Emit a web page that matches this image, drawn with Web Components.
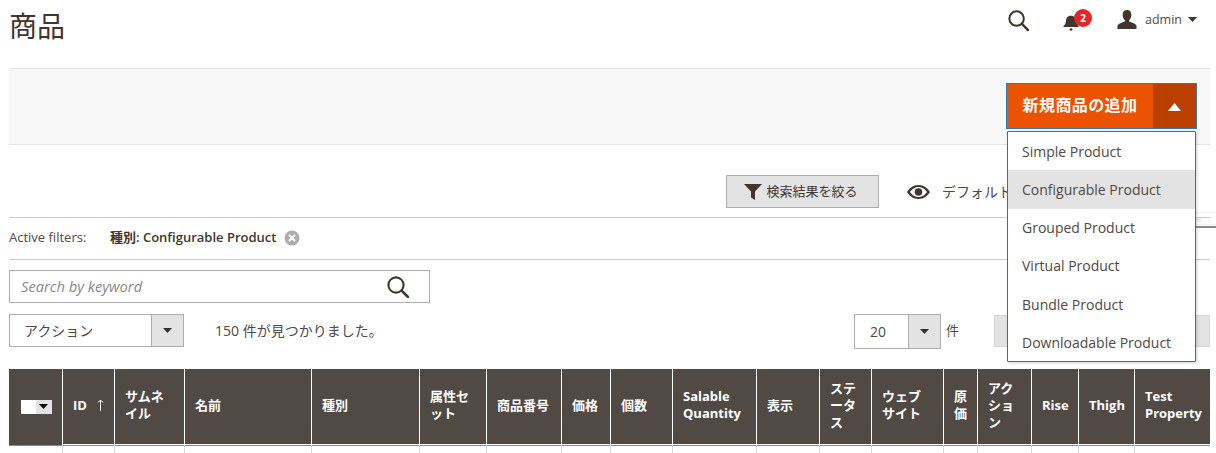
<!DOCTYPE html>
<html lang="ja"><head><meta charset="utf-8"><title>商品</title>
<style>
html,body{margin:0;padding:0;background:#fff;height:453px;overflow:hidden}
body{font-family:"Open Sans","Noto Sans CJK JP",sans-serif;color:#41362f;font-size:14px}
</style></head><body>
<admin-page>
  <page-header></page-header>
  <action-bar></action-bar>
  <grid-toolbar></grid-toolbar>
  <active-filters></active-filters>
  <search-row></search-row>
  <paging-row></paging-row>
  <product-grid></product-grid>
  <drag-ghost></drag-ghost>
</admin-page>
<script>
const FONT='"Open Sans","Noto Sans CJK JP",sans-serif';
function def(name,css,html){
  customElements.define(name,class extends HTMLElement{
    constructor(){super();const r=this.attachShadow({mode:'open'});
      r.innerHTML='<style>:host{box-sizing:border-box}*{box-sizing:border-box}'+css+'</style>'+html;}
  });
}
const caret=(c='#303030')=>`<svg width="9" height="5" viewBox="0 0 9 5"><path d="M0 0h9L4.5 5z" fill="${c}"/></svg>`;
const lens=(s)=>`<svg width="${s}" height="${s}" viewBox="0 0 22 22" fill="none" stroke="#41362f" stroke-width="2.1"><circle cx="9" cy="9" r="7.6"/><path d="M14.6 14.6 21 21" stroke-width="2.6" stroke-linecap="round"/></svg>`;

def('admin-page',':host{display:block;position:relative;width:1216px;height:453px;overflow:hidden;padding:0 6px 0 9px}','<slot></slot>');

def('page-header',`:host{display:flex;height:68px;align-items:flex-start;justify-content:space-between}
h1{margin:0;padding-top:8px;font:400 28px/36px ${FONT};color:#41362f}
.r{display:flex;align-items:center;height:38px;font-size:12.5px;color:#514943}
.bell{position:relative;margin-left:34px;width:20px;height:20px}
.bell svg{position:absolute;left:0;top:6px}
.badge{position:absolute;left:11px;top:0;width:18px;height:18px;border-radius:50%;background:#e22626;color:#fff;font:700 10px/18px ${FONT};text-align:center}
.user{margin-left:34px;display:flex}
.name{margin-left:8px}
.car{margin-left:6px;display:flex;margin-right:13px}`,
`<h1>商品</h1><div class="r">
<span style="display:flex;margin-top:3px">${lens(21)}</span>
<span class="bell"><svg width="16" height="17" viewBox="0 0 16 20" preserveAspectRatio="none"><path d="M8 1c3.400 0 4.800 2.600 5 5.500.2 3 .8 4.900 2.500 6.500v1H.5v-1C2.200 11.400 2.800 9.500 3 6.500 3.200 3.600 4.600 1 8 1z" fill="#41362f"/><circle cx="8" cy="17" r="1.400" fill="#41362f"/></svg><span class="badge">2</span></span>
<span class="user"><svg width="20" height="19" viewBox="0 0 20 19"><path d="M10 0c2.900 0 4.400 2 4.400 4.900 0 2.200-1 4.300-2.300 5.300v1.400c2.600.9 6 1.700 7.400 3.900V19H.5v-3.500c1.400-2.200 4.800-3 7.400-3.900v-1.400C6.600 9.200 5.600 7.100 5.600 4.900 5.600 2 7.100 0 10 0z" fill="#41362f"/></svg></span>
<span class="name">admin</span><span class="car">${caret('#41362f')}</span></div>`);

def('action-bar',`:host{display:flex;justify-content:flex-end;height:77px;background:#f8f8f8;border-top:1px solid #e3e3e3;border-bottom:1px solid #e3e3e3;padding:14px 13px 0 0;position:relative;z-index:5}
.split{position:relative;display:flex;width:191px;height:46px;border:1px solid #2d7bb5;background:#eb5202;color:#fff}
.main{flex:1;font:700 16px/42px ${FONT};letter-spacing:.4px;text-align:center;white-space:nowrap}
.tog{width:43px;background:#ba4000;display:flex;align-items:center;justify-content:center;padding-top:1px}
.menu{position:absolute;left:0;top:47px;width:189px;height:231px;background:#fff;border:1px solid #1979c3;box-shadow:1px 1px 3px rgba(0,0,0,.18);border-radius:1px;display:flex;flex-direction:column;color:#514943;font:400 14px/38.300px ${FONT}}
.menu div{padding:.5px 0 0 14px;height:38.300px}
.menu .on{background:#e3e3e3}`,
`<div class="split"><div class="main">新規商品の追加</div><div class="tog"><svg width="13" height="8" viewBox="0 0 13 8"><path d="M6.500 0 13 8H0z" fill="#fff"/></svg></div>
<div class="menu"><div>Simple Product</div><div class="on">Configurable Product</div><div>Grouped Product</div><div>Virtual Product</div><div>Bundle Product</div><div>Downloadable Product</div></div></div>`);

def('grid-toolbar',`:host{display:flex;height:73px;border-bottom:1px solid #ccc;padding:30px 0 0 717px;align-items:flex-start;white-space:nowrap;overflow:hidden}
.f{width:153px;height:33px;background:#e3e3e3;border:1px solid #adadad;display:flex;align-items:center;justify-content:center;font:400 13px/1 ${FONT};color:#41362f;gap:4px;padding-right:3px}
.e{display:flex;align-items:center;height:33px;margin-left:28px;font:400 14px/1 ${FONT};color:#514943;gap:12px}`,
`<div class="f"><svg width="18" height="16" viewBox="0 0 18 16"><path d="M0 0h18l-7 7.500V16l-4-2.500V7.500z" fill="#41362f"/></svg><span>検索結果を絞る</span></div>
<div class="e"><svg width="23" height="14" viewBox="0 0 23 14"><path fill-rule="evenodd" d="M11.500 0C17 0 21 3.500 23 7c-2 3.500-6 7-11.500 7S2 10.500 0 7c2-3.500 6-7 11.500-7zM3 7c1.800 2.500 4.500 5 8.500 5s6.700-2.500 8.500-5c-1.800-2.500-4.500-5-8.500-5S4.800 4.500 3 7z" fill="#41362f"/><circle cx="11.500" cy="7" r="3.800" fill="#41362f"/></svg><span>デフォルト</span></div>`);

def('active-filters',`:host{display:flex;height:42px;border-bottom:1px solid #ccc;align-items:center;padding-bottom:2px;font:400 13px/1 ${FONT};color:#514943}
.l{width:101px}
b{font:600 13px/1 ${FONT};color:#41362f}
.x{margin-left:8px;display:flex}`,
`<span class="l">Active filters:</span><b>種別: Configurable Product</b><span class="x"><svg width="16" height="16" viewBox="0 0 16 16"><circle cx="8" cy="8" r="7.500" fill="#adadad"/><path d="M5 5l6 6M11 5l-6 6" stroke="#fff" stroke-width="2"/></svg></span>`);

def('search-row',`:host{display:block;padding-top:10px;height:44px}
.b{width:421px;height:33px;border:1px solid #adadad;display:flex;align-items:center;justify-content:space-between;padding:0 20px 0 11px;font:italic 400 14.700px/1 ${FONT};color:#8a8a8a}`,
`<div class="b"><span>Search by keyword</span><span style="display:flex;margin-top:1px">${lens(22)}</span></div>`);

def('select-box',`:host{display:flex;height:33px;border:1px solid #adadad;font:400 14px/1 ${FONT};color:#514943;background:#fff}
.t{flex:1;display:flex;align-items:center}
.a{width:32px;background:#e3e3e3;border-left:1px solid #adadad;display:flex;align-items:center;justify-content:center}`,
`<span class="t"><slot></slot></span><span class="a">${caret()}</span>`);

def('paging-row',`:host{display:flex;height:65px;padding-top:10px;align-items:flex-start;font:400 14px/1 ${FONT};color:#514943;white-space:nowrap}
.found{margin-left:31px;height:33px;display:flex;align-items:center}
select-box.a{width:175px;padding-left:14px}
select-box.n{width:87px;height:35px;margin-left:auto;padding-left:15px}
.u{margin-left:5px;height:33px;display:flex;align-items:center;font-size:13px}
.g{margin-left:35px;width:216px;height:32px;margin-top:1px;background:#e3e3e3;border:1px solid #d6d6d6}`,
`<select-box class="a">アクション</select-box><span class="found">150 件が見つかりました。</span><select-box class="n">20</select-box><span class="u">件</span><span class="g"></span>`);

const cols=[["",53],["ID",52],["サムネイル",70],["名前",127],["種別",108],["属性セット",67],["商品番号",75],["価格",49],["個数",62],["Salable Quantity",84],["表示",63],["ステータス",52],["ウェブサイト",72],["原価",34],["アクション",54],["Rise",47],["Thigh",56],["Test Property",76]];
def('product-grid',`:host{display:block}
table{border-collapse:separate;border-spacing:0;table-layout:fixed;width:1201px}
th{background:#514943;color:#fff;font:700 13px/17px ${FONT};text-align:left;padding:0 10px 3px 10px;height:76px;border-left:1px solid #fff;border-bottom:1px solid #fff;box-shadow:0 1px 0 #8a8a8a;overflow:hidden}
th:first-child{border-left:0;border-bottom-color:#514943;padding:0}
th:last-child{padding-right:4px}
td{height:10px;padding:0;border-left:1px solid #d6d6d6}
td:first-child{border-left:0}
.cb{display:flex;justify-content:center;padding-left:1px}
.cb i{display:block;width:15px;height:14px;background:#fff}
.cb span{display:flex;align-items:center;justify-content:center;width:16px;height:14px;background:#e3e3e3}
.id{display:flex;gap:10px;align-items:center;white-space:nowrap}`,
`<table><colgroup>${cols.map(c=>`<col style="width:${c[1]}px">`).join('')}</colgroup><thead><tr>${cols.map((c,i)=>{
 if(i==0)return `<th><div class="cb"><i></i><span>${caret('#000')}</span></div></th>`;
 if(i==1)return `<th><div class="id"><span>ID</span><svg width="7" height="12" viewBox="0 0 7 12"><path d="M3.500 12V1M1 3.500 3.500 1 6 3.500" fill="none" stroke="#fff" stroke-width="1"/></svg></div></th>`;
 return `<th>${c[0]}</th>`}).join('')}</tr></thead><tbody><tr>${cols.map(()=>'<td></td>').join('')}</tr></tbody></table>`);

def('drag-ghost',`:host{position:absolute;left:1145px;top:212px;width:71px;height:16px;z-index:2;pointer-events:none;overflow:hidden}
.t{position:absolute;left:0;top:0;width:80px;height:13px;border:1px solid #eee;font:400 9px/12px ${FONT};color:#d8d8d8;padding-left:2px;white-space:nowrap}
.l{position:absolute;left:7px;top:14px;right:0;height:2px;background:#8a8a8a}`,
`<div class="t">Configurable</div><div class="l"></div>`);
</script></body></html>
